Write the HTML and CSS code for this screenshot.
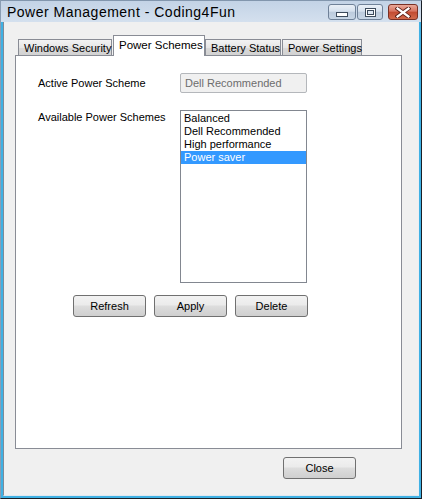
FILE: index.html
```html
<!DOCTYPE html>
<html>
<head>
<meta charset="utf-8">
<link rel="stylesheet" href="styles.css">
</head>
<body>
<div class="window">
  <div class="titlebar">
    <span class="title">Power Management - Coding4Fun</span>
    <div class="caption">
      <div class="cbtn min"><span class="min-glyph"></span></div>
      <div class="cbtn max"><span class="max-glyph"></span></div>
      <div class="cbtn close">
        <svg width="16" height="11" viewBox="0 0 16 11">
          <path d="M2.5 1.5 L13.5 9.5 M13.5 1.5 L2.5 9.5" stroke="#5a1d14" stroke-width="4" stroke-linecap="square"/>
          <path d="M2.5 1.5 L13.5 9.5 M13.5 1.5 L2.5 9.5" stroke="#ffffff" stroke-width="2.2" stroke-linecap="square"/>
        </svg>
      </div>
    </div>
  </div>
  <div class="frame">
    <div class="client">
      <div class="tabs">
        <div class="tab t1">Windows Security</div>
        <div class="tab active">Power Schemes</div>
        <div class="tab t3">Battery Status</div>
        <div class="tab t4">Power Settings</div>
      </div>
      <div class="panel">
        <div class="form">
          <div class="label">Active Power Scheme</div>
          <div class="textbox">Dell Recommended</div>
          <div class="label top">Available Power Schemes</div>
          <div class="listbox">
            <div class="item">Balanced</div>
            <div class="item">Dell Recommended</div>
            <div class="item">High performance</div>
            <div class="item selected">Power saver</div>
          </div>
        </div>
        <div class="actions">
          <button class="btn">Refresh</button>
          <button class="btn">Apply</button>
          <button class="btn">Delete</button>
        </div>
      </div>
      <div class="footer">
        <button class="btn">Close</button>
      </div>
    </div>
  </div>
</div>
</body>
</html>
```

FILE: styles.css
```css
* { box-sizing: border-box; }
html, body { margin: 0; padding: 0; }
body {
  width: 422px;
  height: 499px;
  font-family: "Liberation Sans", Arial, sans-serif;
  font-size: 11px;
  color: #000;
  background: #fff;
}
.window {
  width: 422px;
  height: 499px;
  display: flex;
  flex-direction: column;
  border: 1px solid #1a1f26;
  border-left-color: #8a9db3;
  border-top-color: #8296ad;
  background: #3fb1e4;
}
.titlebar {
  height: 21px;
  flex: none;
  display: flex;
  align-items: flex-start;
  justify-content: space-between;
  background: linear-gradient(#c3d3e6, #d4e0ee);
  padding-left: 6px;
  padding-right: 3px;
}
.title {
  font-size: 14px;
  line-height: 14px;
  margin-top: 4px;
  color: #000;
  letter-spacing: 0.5px;
}
.caption {
  display: flex;
  margin-top: 3px;
  gap: 1px;
}
.cbtn {
  height: 16px;
  border: 1px solid #6f8198;
  border-radius: 3px;
  display: flex;
  align-items: center;
  justify-content: center;
  background: linear-gradient(#e9eff6 0%, #d6e1ee 45%, #bccbdd 50%, #c8d6e6 100%);
}
.min { width: 28px; }
.max { width: 26px; }
.close {
  width: 30px;
  margin-left: 4px;
  border-color: #7a3024;
  background: linear-gradient(#e9a899 0%, #d7735f 45%, #c24a31 50%, #d26a4c 100%);
}
.min-glyph {
  width: 12px;
  height: 5px;
  margin-top: 5px;
  border: 1px solid #3d4b5c;
  background: #fff;
}
.max-glyph {
  width: 11px;
  height: 9px;
  border: 1px solid #3d4b5c;
  background: #dce6f1;
  box-shadow: inset 0 0 0 1px #fff, inset 0 0 0 2px #3d4b5c;
}
.frame {
  flex: 1;
  display: flex;
  padding: 0 2px 2px 2px;
}
.client {
  flex: 1;
  background: #f0f0f0;
  border-left: 1px solid #7f8b98;
  border-right: 1px solid #e8eef4;
  border-bottom: 1px solid #e0e8f0;
  padding: 13px 0 0 11px;
  display: flex;
  flex-direction: column;
}
.tabs {
  display: flex;
  align-items: flex-end;
  height: 20px;
  padding-left: 3px;
}
.tab {
  height: 16px;
  border: 1px solid #898c95;
  border-bottom: none;
  background: linear-gradient(#f3f3f3, #e6e6e6 50%, #d9d9d9 51%, #d2d2d2);
  padding: 2px 4px 0 5px;
  white-space: nowrap;
  line-height: 13px;
}
.tab + .tab { margin-left: -1px; }
.t1 { width: 94px; }
.t3 { width: 76px; margin-left: 0 !important; }
.t4 { width: 80px; margin-left: 1px !important; }
.tab.active {
  width: 92px;
  height: 21px;
  margin-left: 1px;
  margin-bottom: -1px;
  background: #fff;
  position: relative;
  z-index: 1;
  padding-top: 3px;
  font-size: 11.5px;
}
.panel {
  width: 387px;
  height: 394px;
  background: #fff;
  border: 1px solid #898c95;
  padding: 17px 0 0 22px;
}
.form {
  display: grid;
  grid-template-columns: 142px 127px;
  row-gap: 17px;
  align-items: center;
}
.label { white-space: nowrap; }
.label.top { align-self: start; padding-top: 1px; }
.textbox {
  height: 20px;
  border: 1px solid #b4b7bb;
  border-radius: 2px;
  background: #f0f0f0;
  color: #6d6d6d;
  padding: 3px 0 0 4px;
  line-height: 13px;
}
.listbox {
  height: 173px;
  border: 1px solid #828790;
  padding: 1px 0 0 0;
  background: #fff;
}
.item {
  height: 13px;
  line-height: 13px;
  padding-left: 3px;
}
.item.selected {
  background: #3399ff;
  color: #fff;
}
.actions {
  display: flex;
  gap: 8px;
  margin-top: 12px;
  padding-left: 35px;
}
.btn {
  width: 73px;
  height: 22px;
  font-family: "Liberation Sans", Arial, sans-serif;
  font-size: 11px;
  color: #000;
  border: 1px solid #707070;
  border-radius: 3px;
  background: linear-gradient(#f2f2f2 0%, #ebebeb 45%, #dddddd 50%, #cfcfcf 100%);
  padding: 0;
  margin: 0;
}
.footer {
  display: flex;
  justify-content: flex-end;
  width: 387px;
  padding-right: 46px;
  margin-top: 8px;
}
```
